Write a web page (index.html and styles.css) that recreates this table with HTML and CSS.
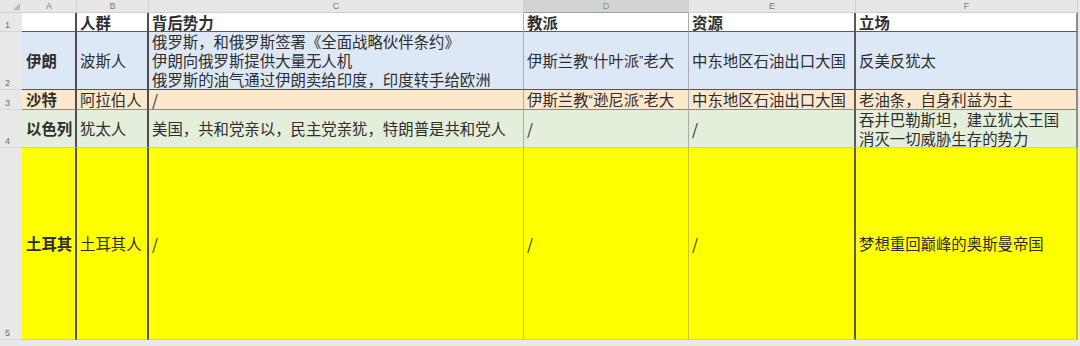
FILE: index.html
```html
<!DOCTYPE html>
<html lang="zh">
<head>
<meta charset="utf-8">
<link rel="stylesheet" href="styles.css">
</head>
<body>
<div class="sheet">
  <div class="corner"><span class="tri"></span></div>
  <div class="colhead">A</div>
  <div class="colhead">B</div>
  <div class="colhead">C</div>
  <div class="colhead sel">D</div>
  <div class="colhead">E</div>
  <div class="colhead">F</div>
  <div class="colhead edge"></div>

  <div class="rowhead">1</div>
  <div class="cell h bA"></div>
  <div class="cell h bB">人群</div>
  <div class="cell h bC">背后势力</div>
  <div class="cell h bD">教派</div>
  <div class="cell h bE">资源</div>
  <div class="cell h bF">立场</div>
  <div class="edge"></div>

  <div class="rowhead">2</div>
  <div class="cell r2 bA b">伊朗</div>
  <div class="cell r2 bB">波斯人</div>
  <div class="cell r2 bC">俄罗斯，和俄罗斯签署《全面战略伙伴条约》<br>伊朗向俄罗斯提供大量无人机<br>俄罗斯的油气通过伊朗卖给印度，印度转手给欧洲</div>
  <div class="cell r2 bD">伊斯兰教<span class="q">“</span>什叶派<span class="q">”</span>老大</div>
  <div class="cell r2 bE">中东地区石油出口大国</div>
  <div class="cell r2 bF">反美反犹太</div>
  <div class="edge"></div>

  <div class="rowhead">3</div>
  <div class="cell r3 bA b">沙特</div>
  <div class="cell r3 bB">阿拉伯人</div>
  <div class="cell r3 bC">/</div>
  <div class="cell r3 bD">伊斯兰教<span class="q">“</span>逊尼派<span class="q">”</span>老大</div>
  <div class="cell r3 bE">中东地区石油出口大国</div>
  <div class="cell r3 bF">老油条，自身利益为主</div>
  <div class="edge"></div>

  <div class="rowhead">4</div>
  <div class="cell r4 bA b">以色列</div>
  <div class="cell r4 bB">犹太人</div>
  <div class="cell r4 bC">美国，共和党亲以，民主党亲犹，特朗普是共和党人</div>
  <div class="cell r4 bD">/</div>
  <div class="cell r4 bE">/</div>
  <div class="cell r4 bF">吞并巴勒斯坦，建立犹太王国<br>消灭一切威胁生存的势力</div>
  <div class="edge"></div>

  <div class="rowhead">5</div>
  <div class="cell r5 bA b">土耳其</div>
  <div class="cell r5 bB">土耳其人</div>
  <div class="cell r5 bC">/</div>
  <div class="cell r5 bD">/</div>
  <div class="cell r5 bE">/</div>
  <div class="cell r5 bF">梦想重回巅峰的奥斯曼帝国</div>
  <div class="edge"></div>
</div>
</body>
</html>
```

FILE: styles.css
```css
html, body {
  margin: 0;
  padding: 0;
  background: #e9e9e9;
}
body {
  width: 1080px;
  height: 346px;
  overflow: hidden;
  font-family: "Noto Sans CJK SC", "Noto Sans", sans-serif;
  color: #2e2e2e;
}
.sheet {
  display: grid;
  grid-template-columns: 22px 55px 72px 375px 165px 167px 222px 2px;
  grid-template-rows: 13px 19px 58px 20px 38px 192px;
  background: #e9e9e9;
}
.corner {
  background: #e6e6e6;
  position: relative;
  border-bottom: 1px solid #cfcfcf;
  box-sizing: border-box;
}
.tri {
  position: absolute;
  right: 2px;
  bottom: 2px;
  width: 0;
  height: 0;
  border-left: 7px solid transparent;
  border-bottom: 7px solid #b9b9b9;
}
.colhead {
  background: #e7e7e7;
  color: #7a7a7a;
  font-family: "Liberation Sans", sans-serif;
  font-size: 9px;
  line-height: 12px;
  text-align: center;
  border-right: 1px solid #d2d2d2;
  border-bottom: 1px solid #cfcfcf;
  box-sizing: border-box;
}
.colhead.sel {
  background: #d3d3d3;
  color: #7e9a88;
  border-bottom: 1px solid #8fa898;
}
.colhead.edge {
  border-right: none;
}
.rowhead {
  background: #e8e8e8;
  color: #6c6c6c;
  font-family: "Liberation Sans", sans-serif;
  font-size: 9px;
  line-height: 10px;
  display: flex;
  align-items: flex-end;
  padding: 0 0 1px 5px;
  border-bottom: 1px solid #d6d6d6;
  box-sizing: border-box;
}
.edge {
  background: #e9e9e9;
}
.cell {
  font-size: 15.4px;
  line-height: 19px;
  padding: 0 3px;
  display: flex;
  align-items: center;
  white-space: nowrap;
  box-sizing: border-box;
  border-bottom: 1px solid #a7a9ab;
}
.cell.h {
  background: #ffffff;
  font-weight: bold;
  align-items: flex-end;
  line-height: 17px;
  border-bottom: 1px solid #5c5c5c;
}
.cell.b {
  font-weight: bold;
}
.q {
  font-family: "Liberation Sans", sans-serif;
  font-size: 13px;
}
.bA { border-right: 1px solid #ccd0d4; }
.bB { border-right: 2px solid #4e4e4e; }
.bA.h, .bA.r2, .bA.r3, .bA.r4, .bA.r5 { border-right: 2px solid #4e4e4e; padding-left: 4px; }
.bC { border-right: 1px solid #a9adb0; }
.bD { border-right: 1px solid #a9adb0; }
.bE { border-right: 2px solid #5a5a5a; }
.bF { border-right: 2px solid #8c8c8c; }
.r2 { background: #dde8f6; border-bottom: 1px solid #545454; }
.r3 { background: #fde8cc; border-bottom: 1px solid #8a8a8a; }
.r4 { background: #e3efdb; border-bottom: 1px solid #c9d29a; }
.r5 { background: #ffff00; border-bottom: 1px solid #d3d36c; }
.r5.bC, .r5.bD { border-right: 1px solid #c6c63c; }
.r5.bF { border-right: 2px solid #c8c800; }
```
